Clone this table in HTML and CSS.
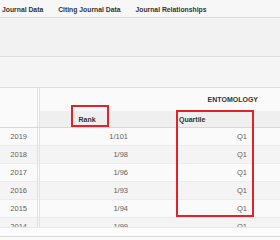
FILE: index.html
```html
<!DOCTYPE html>
<html>
<head>
<meta charset="utf-8">
<link rel="stylesheet" href="styles.css">
</head>
<body>
<div class="page">
  <nav class="tabs">
    <span class="tab">Journal Data</span>
    <span class="tab">Citing Journal Data</span>
    <span class="tab">Journal Relationships</span>
  </nav>
  <div class="band band-a"></div>
  <div class="band band-b"></div>
  <div class="table">
    <div class="group-row">
      <div class="c-year"></div>
      <div class="c-rest group-title">ENTOMOLOGY</div>
    </div>
    <div class="head-row">
      <div class="c-year"></div>
      <div class="c-rank head">Rank</div>
      <div class="c-gap"></div>
      <div class="c-q head head-left">Quartile</div>
      <div class="c-tail"></div>
    </div>
    <div class="row"><div class="c-year">2019</div><div class="c-rank">1/101</div><div class="c-gap"></div><div class="c-q">Q1</div><div class="c-tail"></div></div>
    <div class="row alt"><div class="c-year">2018</div><div class="c-rank">1/98</div><div class="c-gap"></div><div class="c-q">Q1</div><div class="c-tail"></div></div>
    <div class="row"><div class="c-year">2017</div><div class="c-rank">1/96</div><div class="c-gap"></div><div class="c-q">Q1</div><div class="c-tail"></div></div>
    <div class="row alt"><div class="c-year">2016</div><div class="c-rank">1/93</div><div class="c-gap"></div><div class="c-q">Q1</div><div class="c-tail"></div></div>
    <div class="row"><div class="c-year">2015</div><div class="c-rank">1/94</div><div class="c-gap"></div><div class="c-q">Q1</div><div class="c-tail"></div></div>
    <div class="row alt cut"><div class="c-year">2014</div><div class="c-rank">1/99</div><div class="c-gap"></div><div class="c-q">Q1</div><div class="c-tail"></div></div>
    <div class="scrollbar"></div>
    <div class="mark mark-rank"></div>
    <div class="mark mark-q"></div>
  </div>
</div>
</body>
</html>
```

FILE: styles.css
```css
* { box-sizing: border-box; }
html, body { margin: 0; padding: 0; }
body {
  width: 280px;
  height: 240px;
  overflow: hidden;
  background: #f4f4f4;
  font-family: "Liberation Sans", Arial, sans-serif;
  color: #555;
}
.page { width: 280px; height: 240px; overflow: hidden; }

.tabs {
  height: 18px;
  display: flex;
  gap: 15px;
  align-items: center;
  padding-left: 2px;
  padding-top: 2px;
  background: #f7f7f7;
  border-bottom: 1px solid #dcdcdc;
  font-size: 6.8px;
  font-weight: bold;
  color: #333;
  white-space: nowrap;
}
.band { border-bottom: 1px solid #e0e0e0; }
.band-a { height: 39px; background: #f2f2f2; }
.band-b { height: 31px; background: #f5f5f5; }

.table {
  position: relative;
  background: #fafafa;
  height: 152px;
  overflow: hidden;
}
.group-row, .head-row, .row {
  display: grid;
  grid-template-columns: 40px 94px 41px 80px 1fr;
}
.group-row { grid-template-columns: 40px 1fr; height: 23px; }
.c-year {
  border-right: 3px double #e2e2e2;
  text-align: right;
  padding-right: 10px;
}
.group-title {
  text-align: right;
  padding-right: 22px;
  padding-top: 8px;
  font-size: 7px;
  font-weight: bold;
  color: #333;
}
.head-row {
  height: 17px;
  background: #efefef;
  border-bottom: 1px solid #d8d8d8;
}
.head-row .c-year { background: #fafafa; }
.head {
  font-size: 7px;
  font-weight: bold;
  color: #333;
  padding-top: 5px;
}
.c-rank.head { text-align: center; padding-right: 0; }
.head-left { text-align: left; padding-left: 4px; }
.row {
  height: 18px;
  border-bottom: 1px solid #ebebeb;
  font-size: 7.5px;
  color: #606060;
  line-height: 18px;
  background: #fafafa;
}
.row.alt { background: #f4f4f4; }
.row .c-rank { text-align: right; padding-right: 6px; }
.row .c-q { text-align: right; padding-right: 8px; }
.row.cut { height: 9px; overflow: hidden; line-height: 18px; border-bottom: none; }
.scrollbar {
  height: 10px;
  background: #fcfcfc;
  border-top: 1px solid #e8e8e8;
  border-bottom: 1px solid #dcdcdc;
}
.mark {
  position: absolute;
  border: 2px solid #e0222b;
}
.mark-rank { left: 71px; top: 17px; width: 38px; height: 22px; }
.mark-q { left: 176px; top: 22px; width: 78px; height: 107px; }
```
